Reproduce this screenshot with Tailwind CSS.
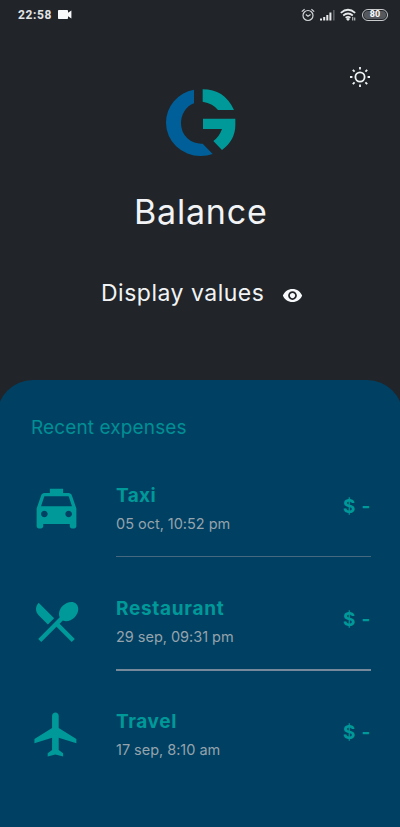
<!DOCTYPE html>
<html lang="en">
<head>
<meta charset="utf-8">
<meta name="viewport" content="width=device-width, initial-scale=1">
<title>Balance</title>
<script src="https://cdn.jsdelivr.net/npm/@tailwindcss/browser@4"></script>
</head>
<body class="w-[400px] h-[827px] overflow-hidden bg-[#212529] text-[#f1f3f5] font-[Inter,'Open_Sans',sans-serif] flex flex-col whitespace-nowrap">
  <header class="h-[29px] shrink-0 flex items-center pl-[18px] pr-[12px]">
    <span class="font-[Roboto,sans-serif] font-bold text-[12px] leading-[16px] tracking-[0.6px] w-[40px] text-[#e2e4e6]">22:58</span>
    <svg class="w-[14px] h-[9px]" viewBox="0 0 14 9" fill="#f8f9fa"><path d="M.8 0h8.4q.8 0 .8.8v2L13.4.5v8L10 6.200v2q0 .8-.8.8H.8Q0 9 0 8.200V.8Q0 0 .8 0z"/></svg>
    <svg class="ml-auto w-[14px] h-[14px]" viewBox="0 0 14 14" fill="none" stroke="#d3d5d7" stroke-width="1.2"><circle cx="7" cy="7.500" r="5"/><path d="M.8 3.600 3.600 1.200M13.200 3.600 10.400 1.200M4.800 6.500 7 8.200l2.600-1.700"/></svg>
    <svg class="ml-[5px] w-[16px] h-[12px]" viewBox="0 0 16 12" fill="#e6e8ea"><path d="M0 9.500h2V11.500H0zM3.200 8h2v3.500h-2zM6.300 6h2v5.500h-2zM9.400 3.500h2v8h-2z"/><path fill="#6a6e72" d="M13.200 1h1.300v10.500h-1.300z"/></svg>
    <svg class="ml-[4px] mr-[1px] w-[17px] h-[14px]" viewBox="0 0 17 14" fill="none" stroke="#e6e8ea" stroke-width="1.700"><path d="M.8 4.900Q8 -1.400 15.200 4.900M3.200 7.500Q8 3.500 12.800 7.500M5.600 9.800Q8 8 10.400 9.800"/><path fill="#e6e8ea" stroke="none" d="m6 11 2-1.200 2 1.200-2 2z"/><path stroke="#b5b8bb" stroke-width="1.200" d="M12.700 9v3.500M14.700 9.500v3"/></svg>
    <span class="ml-[4px] w-[26px] h-[12px] rounded-full border border-[#c9cbcd] p-px"><span class="flex h-full items-center justify-center rounded-full bg-[#55595d] font-[Roboto,sans-serif] font-bold text-[9px] leading-none text-white">80</span></span>
  </header>

  <section class="h-[351px] shrink-0 flex flex-col items-center">
    <div class="h-[46px] w-full flex justify-end pr-[29px] pt-[37px]">
      <svg class="w-[22px] h-[22px] shrink-0" viewBox="0 0 22 22" fill="none" stroke="#f1f3f5" stroke-width="1.800"><circle cx="11" cy="11" r="4.600"/><path d="M11 1v2.400M11 18.600v2.400M1 11h2.400M18.600 11h2.400M3.800 3.800l1.800 1.800M16.400 16.400l1.800 1.800M3.800 18.200l1.800-1.800M16.400 5.600l1.800-1.800"/></svg>
    </div>
    <svg class="w-[100px] h-[95px] shrink-0" viewBox="0 0 300 285">
      <path fill="#005f99" d="M132 44A104 101 0 0 0 48 143A104 100 0 0 0 152 243Q172 243 188 237L158 206A60 60 0 0 1 93 145A60 62 0 0 1 132 85Z"/>
      <path fill="#009999" d="M158 43Q190 43 213 57Q238 74 252 105H204Q190 86 158 80ZM159 131H256V150Q256 195 216 225L190 198Q208 185 216 162H159Z"/>
    </svg>
    <h1 class="mt-[22px] h-[40px] w-[134px] pl-px text-[34px] leading-[40px] font-normal tracking-[0.8px]">Balance</h1>
    <div class="mt-[45px] w-[202px] h-[32px] flex items-center pl-[2px]">
      <span class="w-[181px] shrink-0 text-[23px] leading-[32px] font-normal tracking-[0.5px]">Display values</span>
      <svg class="mt-[5px] w-[21px] h-[21px] shrink-0" viewBox="0 0 24 24" fill="#f8f9fa"><path d="M12 4.500C7 4.500 2.730 7.610 1 12c1.730 4.390 6 7.500 11 7.500s9.270-3.110 11-7.500c-1.730-4.390-6-7.500-11-7.500zM12 17c-2.760 0-5-2.240-5-5s2.240-5 5-5 5 2.240 5 5-2.240 5-5 5zm0-8c-1.660 0-3 1.340-3 3s1.340 3 3 3 3-1.340 3-3-1.340-3-3-3z"/></svg>
    </div>
  </section>

  <main class="-mx-[3px] grow rounded-t-[36px] bg-[#004062] pl-[34px] pr-[32px] pt-[34px] text-[#009999]">
    <h2 class="h-[28px] text-[19px] leading-[28px] font-normal tracking-[0.12px] text-[#008f94]">Recent expenses</h2>
    <ul class="mt-[21px]">
      <li class="h-[113px] flex">
        <svg class="mt-[19px] -ml-px w-[53px] h-[53px] shrink-0" viewBox="0 0 24 24" fill="#009999"><path d="M18.920 6.010C18.720 5.420 18.160 5 17.500 5H15V3H9v2H6.500c-.66 0-1.210.42-1.420 1.010L3 12v8c0 .55.45 1 1 1h1c.55 0 1-.45 1-1v-1h12v1c0 .55.45 1 1 1h1c.55 0 1-.45 1-1v-8l-2.080-5.990zM6.500 16c-.83 0-1.500-.67-1.500-1.500S5.670 13 6.500 13s1.500.67 1.500 1.500S7.330 16 6.500 16zm11 0c-.83 0-1.500-.67-1.500-1.500s.67-1.500 1.500-1.500 1.500.67 1.500 1.500-.67 1.500-1.500 1.500zM5 11l1.500-4.500h11L19 11H5z"/></svg>
        <div class="ml-[33px] grow h-[94px] flex justify-between border-b border-[#47697f]">
          <div class="pt-[19px]">
            <h3 class="h-[28px] text-[19px] leading-[28px] font-bold tracking-[0.4px]">Taxi</h3>
            <p class="mt-[3px] text-[14.500px] leading-[22px] font-normal tracking-[-0.02px] text-[#95a3ad]">05 oct, 10:52 pm</p>
          </div>
          <span class="pt-[30px] text-[19px] leading-[28px] font-bold tracking-[0.7px]">$ -</span>
        </div>
      </li>
      <li class="h-[113px] flex">
        <svg class="mt-[19px] -ml-px w-[53px] h-[53px] shrink-0" viewBox="0 0 24 24" fill="#009999"><path d="M8.100 13.340l2.830-2.830L3.910 3.500c-1.560 1.560-1.560 4.090 0 5.660l4.190 4.180zm6.780-1.810c1.530.71 3.680.21 5.270-1.380 1.910-1.910 2.280-4.650.81-6.120-1.460-1.460-4.200-1.100-6.120.81-1.590 1.590-2.090 3.740-1.380 5.270L3.700 19.870l1.410 1.410L12 14.410l6.880 6.880 1.410-1.410L13.410 13l1.470-1.470z"/></svg>
        <div class="ml-[33px] grow h-[95px] flex justify-between border-b-2 border-[#75899a]">
          <div class="pt-[19px]">
            <h3 class="h-[28px] text-[19px] leading-[28px] font-bold tracking-[0.7px]">Restaurant</h3>
            <p class="mt-[3px] text-[14.500px] leading-[22px] font-normal tracking-[-0.02px] text-[#95a3ad]">29 sep, 09:31 pm</p>
          </div>
          <span class="pt-[30px] text-[19px] leading-[28px] font-bold tracking-[0.7px]">$ -</span>
        </div>
      </li>
      <li class="h-[113px] flex">
        <svg class="mt-[19px] -ml-px w-[53px] h-[53px] shrink-0" viewBox="0 0 24 24" fill="#009999"><path d="M21 16v-2l-8-5V3.500c0-.83-.67-1.500-1.500-1.500S10 2.670 10 3.500V9l-8 5v2l8-2.500V19l-2 1.500V22l3.500-1 3.500 1v-1.500L13 19v-5.500l8 2.500z"/></svg>
        <div class="ml-[33px] grow flex justify-between">
          <div class="pt-[19px]">
            <h3 class="h-[28px] text-[19px] leading-[28px] font-bold tracking-[0.6px]">Travel</h3>
            <p class="mt-[3px] text-[14.500px] leading-[22px] font-normal tracking-[-0.02px] text-[#95a3ad]">17 sep, 8:10 am</p>
          </div>
          <span class="pt-[30px] text-[19px] leading-[28px] font-bold tracking-[0.7px]">$ -</span>
        </div>
      </li>
    </ul>
  </main>
</body>
</html>
